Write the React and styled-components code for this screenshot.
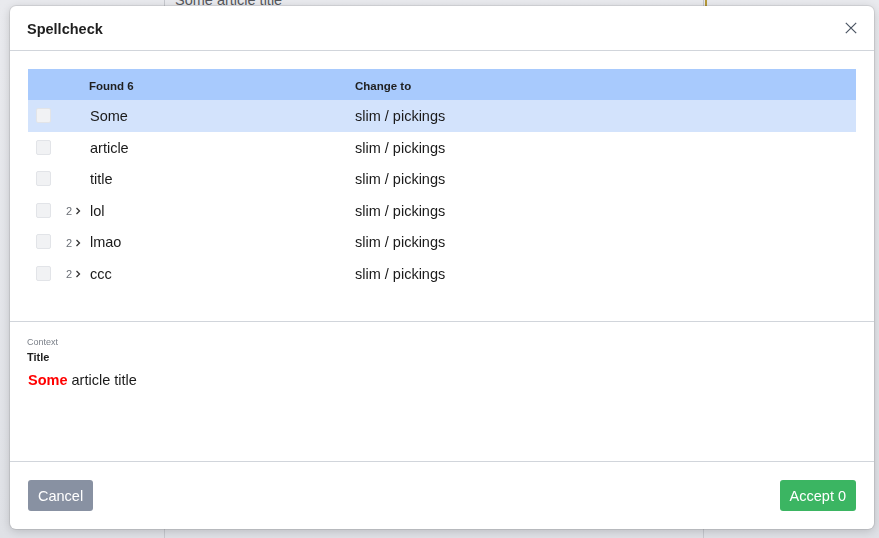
import React from 'react'
import styled, { createGlobalStyle } from 'styled-components'

const rows = [
	{ word: 'Some', change: 'slim / pickings', selected: true },
	{ word: 'article', change: 'slim / pickings' },
	{ word: 'title', change: 'slim / pickings' },
	{ word: 'lol', change: 'slim / pickings', count: 2 },
	{ word: 'lmao', change: 'slim / pickings', count: 2 },
	{ word: 'ccc', change: 'slim / pickings', count: 2 },
]

export default function App() {
	return (
		<>
			<GlobalStyle />
			<Page>
				<Sidebar />
				<Main>
					<ArticleTitle>Some article title</ArticleTitle>
				</Main>
				<Aside>
					<Caret />
				</Aside>
			</Page>
			<Backdrop>
				<Modal>
					<Header>
						<Title>Spellcheck</Title>
						<CloseButton aria-label='Close'>
							<svg width='12' height='12' viewBox='0 0 12 12'>
								<path d='M0.8 0.8 L11.2 11.2 M11.2 0.8 L0.8 11.2' stroke='#4b5563' strokeWidth='1.2' fill='none' />
							</svg>
						</CloseButton>
					</Header>
					<Body>
						<Table>
							<HeadRow>
								<span />
								<span />
								<HeadCell>Found {rows.length}</HeadCell>
								<HeadCell>Change to</HeadCell>
							</HeadRow>
							{rows.map((r) => (
								<Row key={r.word} selected={r.selected}>
									<Checkbox />
									<Count>
										{r.count ? (
											<>
												{r.count}
												<svg width='6' height='8' viewBox='0 0 6 8'>
													<path d='M1.5 1 L4.5 4 L1.5 7' stroke='#333' strokeWidth='1.3' fill='none' />
												</svg>
											</>
										) : null}
									</Count>
									<Cell indent>{r.word}</Cell>
									<Cell>{r.change}</Cell>
								</Row>
							))}
						</Table>
					</Body>
					<Context>
						<ContextLabel>Context</ContextLabel>
						<ContextField>Title</ContextField>
						<ContextText>
							<Mistake>Some</Mistake> article title
						</ContextText>
					</Context>
					<Footer>
						<Button variant='cancel'>Cancel</Button>
						<Button variant='accept'>Accept 0</Button>
					</Footer>
				</Modal>
			</Backdrop>
		</>
	)
}

// STYLED COMPONENTS
const GlobalStyle = createGlobalStyle`
	html, body {
		margin: 0;
		padding: 0;
		height: 100%;
		overflow: hidden;
	}
	body {
		font-family: 'Liberation Sans', Arial, sans-serif;
		color: #1f2937;
		background: #e7e8ec;
	}
`
const Page = styled.div`
	display: grid;
	grid-template-columns: 164px 540px 1fr;
	height: 538px;
	background: linear-gradient(#e9eaee, #dfe1e6);
`
const Sidebar = styled.div``
const Main = styled.div`
	border-left: 1px solid #c6c8ce;
	border-right: 1px solid #c6c8ce;
	padding: 0 10px;
`
const ArticleTitle = styled.div`
	font-size: 14.5px;
	color: #55575c;
	margin-top: -8px;
`
const Aside = styled.div`
	padding-left: 1px;
`
const Caret = styled.div`
	width: 2px;
	height: 7px;
	background: #b69a3a;
`
const Backdrop = styled.div`
	position: fixed;
	inset: 0;
	padding: 6px 5px 0 10px;
`
const Modal = styled.div`
	width: 864px;
	height: 523px;
	background: #fff;
	border-radius: 6px;
	box-shadow: 0 0 0 1px rgba(0, 0, 0, 0.08), 0 2px 10px rgba(0, 0, 0, 0.18);
	display: flex;
	flex-direction: column;
	overflow: hidden;
`
const Header = styled.div`
	height: 45px;
	box-sizing: border-box;
	border-bottom: 1px solid #d1d5db;
	display: flex;
	align-items: center;
	justify-content: space-between;
	padding: 0 17px;
`
const Title = styled.div`
	font-size: 14.5px;
	font-weight: 700;
	color: #1f1f1f;
	margin-top: 1px;
`
const CloseButton = styled.div`
	display: flex;
	margin-right: 0;
	margin-top: -1px;
`
const Body = styled.div`
	height: 271px;
	box-sizing: border-box;
	padding: 18px 18px 0;
	border-bottom: 1px solid #d1d5db;
`
const Table = styled.div`
	display: flex;
	flex-direction: column;
`
const gridCols = `
	display: grid;
	grid-template-columns: 38px 23px 266px 1fr;
	align-items: center;
`
const HeadRow = styled.div`
	${gridCols}
	height: 31px;
	background: #a8cafd;
`
const HeadCell = styled.div`
	font-size: 11.5px;
	font-weight: 700;
	color: #1f1f1f;
	padding-top: 2px;
`
const Row = styled.div`
	${gridCols}
	height: 31.5px;
	background: ${(p) => (p.selected ? '#d3e3fc' : 'transparent')};
`
const Checkbox = styled.div`
	width: 13px;
	height: 13px;
	margin-left: 8px;
	border: 1px solid #e2e4e8;
	border-radius: 2px;
	background: #f1f2f4;
`
const Count = styled.div`
	display: flex;
	align-items: center;
	gap: 3px;
	font-size: 11px;
	color: #6b6f76;
	padding-top: 2px;
`
const Cell = styled.div`
	font-size: 14.5px;
	color: #1a1a1a;
	padding-top: 1px;
	padding-left: ${(p) => (p.indent ? '1px' : '0')};
`
const Context = styled.div`
	height: 140px;
	box-sizing: border-box;
	padding: 15px 17px 0;
	border-bottom: 1px solid #d1d5db;
`
const ContextLabel = styled.div`
	font-size: 9px;
	color: #7b8089;
	line-height: 11px;
`
const ContextField = styled.div`
	font-size: 11px;
	font-weight: 700;
	color: #1f1f1f;
	margin-top: 3px;
	line-height: 13px;
`
const ContextText = styled.div`
	font-size: 14.5px;
	color: #1a1a1a;
	margin-top: 8px;
	padding-left: 1px;
`
const Mistake = styled.span`
	color: #ff0000;
	font-weight: 700;
`
const Footer = styled.div`
	flex: 1;
	display: flex;
	align-items: flex-start;
	justify-content: space-between;
	padding: 18px 18px 0;
`
const Button = styled.button`
	height: 31px;
	padding: 0 10px;
	border: none;
	border-radius: 3px;
	font-family: 'Liberation Sans', Arial, sans-serif;
	font-size: 14.5px;
	color: #fff;
	background: ${(p) => (p.variant === 'accept' ? '#3bb562' : '#8891a2')};
`
